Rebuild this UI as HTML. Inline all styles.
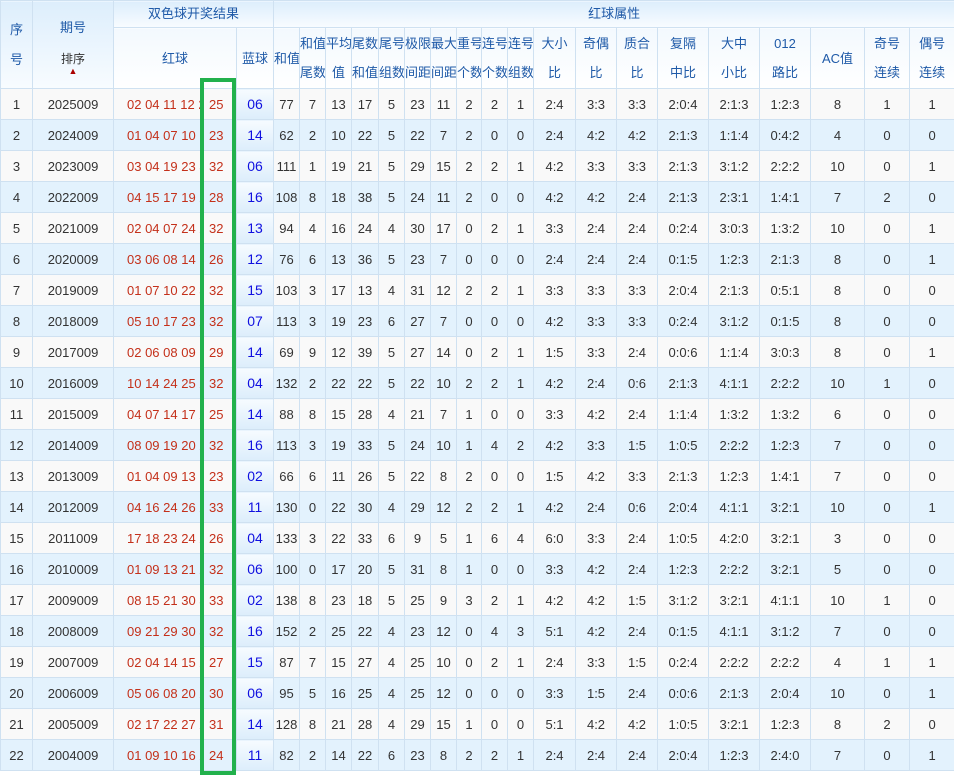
<!DOCTYPE html>
<html><head><meta charset="utf-8">
<style>
body{margin:0;width:954px;height:771px;overflow:hidden;background:#fff;font-family:"Liberation Sans","Noto Sans CJK SC",sans-serif;}
table{border-collapse:collapse;table-layout:fixed;width:954px;font-size:13px;color:#333;}
td,th{border:1px solid #cfe1f1;text-align:center;padding:0;white-space:nowrap;overflow:hidden;}
th{font-weight:normal;color:#1f5aa8;background:linear-gradient(#f3f9fe,#fff);line-height:29px;}
thead tr.r1 th{height:26px;line-height:24px;background:linear-gradient(#ddeefc,#f8fcff);}
thead tr.r2 th{height:60px;}
tbody tr{height:31px;}
tbody td{height:30px;}
tbody tr:nth-child(odd) td{background:#f9f9f9;}
tbody tr:nth-child(even) td{background:#e3f2fd;}
tbody td.b{color:#1010e0;background:linear-gradient(#f6fbff,#dcedfb)!important;font-size:14px;}
td.r{position:relative;text-align:left;color:#c4301a;font-size:13px;}
td.r span.a{position:absolute;left:13px;top:8px;width:74px;overflow:hidden;}
td.r span.c{position:absolute;left:95px;top:8px;}
#g{position:absolute;left:200px;top:78px;width:28px;height:689px;border:4px solid #22b14c;}
th.qh{position:relative;}
th.qh div{position:absolute;left:0;right:0;line-height:16px;}
.sm{font-size:12px;color:#333}
</style></head><body>
<table>
<colgroup><col style="width:32px"><col style="width:81px"><col style="width:123px"><col style="width:37px"><col style="width:26px"><col style="width:26px"><col style="width:26px"><col style="width:27px"><col style="width:26px"><col style="width:26px"><col style="width:26px"><col style="width:25px"><col style="width:26px"><col style="width:26px"><col style="width:42px"><col style="width:41px"><col style="width:41px"><col style="width:51px"><col style="width:51px"><col style="width:51px"><col style="width:54px"><col style="width:45px"><col style="width:45px"></colgroup>
<thead>
<tr class="r1"><th rowspan="2" style="line-height:30px">序<br>号</th><th rowspan="2" class="qh"><div style="top:19px">期号</div><div class="sm" style="top:50px">排序</div><div style="top:62px;color:#a00;font-size:9px">▲</div></th><th colspan="2">双色球开奖结果</th><th colspan="19">红球属性</th></tr>
<tr class="r2"><th>红球</th><th>蓝球</th><th>和值</th><th>和值<br>尾数</th><th>平均<br>值</th><th>尾数<br>和值</th><th>尾号<br>组数</th><th>极限<br>间距</th><th>最大<br>间距</th><th>重号<br>个数</th><th>连号<br>个数</th><th>连号<br>组数</th><th>大小<br>比</th><th>奇偶<br>比</th><th>质合<br>比</th><th>复隔<br>中比</th><th>大中<br>小比</th><th>012<br>路比</th><th>AC值</th><th>奇号<br>连续</th><th>偶号<br>连续</th></tr>
</thead>
<tbody>
<tr><td>1</td><td>2025009</td><td class="r"><span class="a">02 04 11 12 21</span><span class="c">25</span></td><td class="b">06</td><td>77</td><td>7</td><td>13</td><td>17</td><td>5</td><td>23</td><td>11</td><td>2</td><td>2</td><td>1</td><td>2:4</td><td>3:3</td><td>3:3</td><td>2:0:4</td><td>2:1:3</td><td>1:2:3</td><td>8</td><td>1</td><td>1</td></tr>
<tr><td>2</td><td>2024009</td><td class="r"><span class="a">01 04 07 10 17</span><span class="c">23</span></td><td class="b">14</td><td>62</td><td>2</td><td>10</td><td>22</td><td>5</td><td>22</td><td>7</td><td>2</td><td>0</td><td>0</td><td>2:4</td><td>4:2</td><td>4:2</td><td>2:1:3</td><td>1:1:4</td><td>0:4:2</td><td>4</td><td>0</td><td>0</td></tr>
<tr><td>3</td><td>2023009</td><td class="r"><span class="a">03 04 19 23 30</span><span class="c">32</span></td><td class="b">06</td><td>111</td><td>1</td><td>19</td><td>21</td><td>5</td><td>29</td><td>15</td><td>2</td><td>2</td><td>1</td><td>4:2</td><td>3:3</td><td>3:3</td><td>2:1:3</td><td>3:1:2</td><td>2:2:2</td><td>10</td><td>0</td><td>1</td></tr>
<tr><td>4</td><td>2022009</td><td class="r"><span class="a">04 15 17 19 25</span><span class="c">28</span></td><td class="b">16</td><td>108</td><td>8</td><td>18</td><td>38</td><td>5</td><td>24</td><td>11</td><td>2</td><td>0</td><td>0</td><td>4:2</td><td>4:2</td><td>2:4</td><td>2:1:3</td><td>2:3:1</td><td>1:4:1</td><td>7</td><td>2</td><td>0</td></tr>
<tr><td>5</td><td>2021009</td><td class="r"><span class="a">02 04 07 24 25</span><span class="c">32</span></td><td class="b">13</td><td>94</td><td>4</td><td>16</td><td>24</td><td>4</td><td>30</td><td>17</td><td>0</td><td>2</td><td>1</td><td>3:3</td><td>2:4</td><td>2:4</td><td>0:2:4</td><td>3:0:3</td><td>1:3:2</td><td>10</td><td>0</td><td>1</td></tr>
<tr><td>6</td><td>2020009</td><td class="r"><span class="a">03 06 08 14 15</span><span class="c">26</span></td><td class="b">12</td><td>76</td><td>6</td><td>13</td><td>36</td><td>5</td><td>23</td><td>7</td><td>0</td><td>0</td><td>0</td><td>2:4</td><td>2:4</td><td>2:4</td><td>0:1:5</td><td>1:2:3</td><td>2:1:3</td><td>8</td><td>0</td><td>1</td></tr>
<tr><td>7</td><td>2019009</td><td class="r"><span class="a">01 07 10 22 31</span><span class="c">32</span></td><td class="b">15</td><td>103</td><td>3</td><td>17</td><td>13</td><td>4</td><td>31</td><td>12</td><td>2</td><td>2</td><td>1</td><td>3:3</td><td>3:3</td><td>3:3</td><td>2:0:4</td><td>2:1:3</td><td>0:5:1</td><td>8</td><td>0</td><td>0</td></tr>
<tr><td>8</td><td>2018009</td><td class="r"><span class="a">05 10 17 23 26</span><span class="c">32</span></td><td class="b">07</td><td>113</td><td>3</td><td>19</td><td>23</td><td>6</td><td>27</td><td>7</td><td>0</td><td>0</td><td>0</td><td>4:2</td><td>3:3</td><td>3:3</td><td>0:2:4</td><td>3:1:2</td><td>0:1:5</td><td>8</td><td>0</td><td>0</td></tr>
<tr><td>9</td><td>2017009</td><td class="r"><span class="a">02 06 08 09 15</span><span class="c">29</span></td><td class="b">14</td><td>69</td><td>9</td><td>12</td><td>39</td><td>5</td><td>27</td><td>14</td><td>0</td><td>2</td><td>1</td><td>1:5</td><td>3:3</td><td>2:4</td><td>0:0:6</td><td>1:1:4</td><td>3:0:3</td><td>8</td><td>0</td><td>1</td></tr>
<tr><td>10</td><td>2016009</td><td class="r"><span class="a">10 14 24 25 27</span><span class="c">32</span></td><td class="b">04</td><td>132</td><td>2</td><td>22</td><td>22</td><td>5</td><td>22</td><td>10</td><td>2</td><td>2</td><td>1</td><td>4:2</td><td>2:4</td><td>0:6</td><td>2:1:3</td><td>4:1:1</td><td>2:2:2</td><td>10</td><td>1</td><td>0</td></tr>
<tr><td>11</td><td>2015009</td><td class="r"><span class="a">04 07 14 17 21</span><span class="c">25</span></td><td class="b">14</td><td>88</td><td>8</td><td>15</td><td>28</td><td>4</td><td>21</td><td>7</td><td>1</td><td>0</td><td>0</td><td>3:3</td><td>4:2</td><td>2:4</td><td>1:1:4</td><td>1:3:2</td><td>1:3:2</td><td>6</td><td>0</td><td>0</td></tr>
<tr><td>12</td><td>2014009</td><td class="r"><span class="a">08 09 19 20 25</span><span class="c">32</span></td><td class="b">16</td><td>113</td><td>3</td><td>19</td><td>33</td><td>5</td><td>24</td><td>10</td><td>1</td><td>4</td><td>2</td><td>4:2</td><td>3:3</td><td>1:5</td><td>1:0:5</td><td>2:2:2</td><td>1:2:3</td><td>7</td><td>0</td><td>0</td></tr>
<tr><td>13</td><td>2013009</td><td class="r"><span class="a">01 04 09 13 16</span><span class="c">23</span></td><td class="b">02</td><td>66</td><td>6</td><td>11</td><td>26</td><td>5</td><td>22</td><td>8</td><td>2</td><td>0</td><td>0</td><td>1:5</td><td>4:2</td><td>3:3</td><td>2:1:3</td><td>1:2:3</td><td>1:4:1</td><td>7</td><td>0</td><td>0</td></tr>
<tr><td>14</td><td>2012009</td><td class="r"><span class="a">04 16 24 26 27</span><span class="c">33</span></td><td class="b">11</td><td>130</td><td>0</td><td>22</td><td>30</td><td>4</td><td>29</td><td>12</td><td>2</td><td>2</td><td>1</td><td>4:2</td><td>2:4</td><td>0:6</td><td>2:0:4</td><td>4:1:1</td><td>3:2:1</td><td>10</td><td>0</td><td>1</td></tr>
<tr><td>15</td><td>2011009</td><td class="r"><span class="a">17 18 23 24 25</span><span class="c">26</span></td><td class="b">04</td><td>133</td><td>3</td><td>22</td><td>33</td><td>6</td><td>9</td><td>5</td><td>1</td><td>6</td><td>4</td><td>6:0</td><td>3:3</td><td>2:4</td><td>1:0:5</td><td>4:2:0</td><td>3:2:1</td><td>3</td><td>0</td><td>0</td></tr>
<tr><td>16</td><td>2010009</td><td class="r"><span class="a">01 09 13 21 24</span><span class="c">32</span></td><td class="b">06</td><td>100</td><td>0</td><td>17</td><td>20</td><td>5</td><td>31</td><td>8</td><td>1</td><td>0</td><td>0</td><td>3:3</td><td>4:2</td><td>2:4</td><td>1:2:3</td><td>2:2:2</td><td>3:2:1</td><td>5</td><td>0</td><td>0</td></tr>
<tr><td>17</td><td>2009009</td><td class="r"><span class="a">08 15 21 30 31</span><span class="c">33</span></td><td class="b">02</td><td>138</td><td>8</td><td>23</td><td>18</td><td>5</td><td>25</td><td>9</td><td>3</td><td>2</td><td>1</td><td>4:2</td><td>4:2</td><td>1:5</td><td>3:1:2</td><td>3:2:1</td><td>4:1:1</td><td>10</td><td>1</td><td>0</td></tr>
<tr><td>18</td><td>2008009</td><td class="r"><span class="a">09 21 29 30 31</span><span class="c">32</span></td><td class="b">16</td><td>152</td><td>2</td><td>25</td><td>22</td><td>4</td><td>23</td><td>12</td><td>0</td><td>4</td><td>3</td><td>5:1</td><td>4:2</td><td>2:4</td><td>0:1:5</td><td>4:1:1</td><td>3:1:2</td><td>7</td><td>0</td><td>0</td></tr>
<tr><td>19</td><td>2007009</td><td class="r"><span class="a">02 04 14 15 25</span><span class="c">27</span></td><td class="b">15</td><td>87</td><td>7</td><td>15</td><td>27</td><td>4</td><td>25</td><td>10</td><td>0</td><td>2</td><td>1</td><td>2:4</td><td>3:3</td><td>1:5</td><td>0:2:4</td><td>2:2:2</td><td>2:2:2</td><td>4</td><td>1</td><td>1</td></tr>
<tr><td>20</td><td>2006009</td><td class="r"><span class="a">05 06 08 20 26</span><span class="c">30</span></td><td class="b">06</td><td>95</td><td>5</td><td>16</td><td>25</td><td>4</td><td>25</td><td>12</td><td>0</td><td>0</td><td>0</td><td>3:3</td><td>1:5</td><td>2:4</td><td>0:0:6</td><td>2:1:3</td><td>2:0:4</td><td>10</td><td>0</td><td>1</td></tr>
<tr><td>21</td><td>2005009</td><td class="r"><span class="a">02 17 22 27 29</span><span class="c">31</span></td><td class="b">14</td><td>128</td><td>8</td><td>21</td><td>28</td><td>4</td><td>29</td><td>15</td><td>1</td><td>0</td><td>0</td><td>5:1</td><td>4:2</td><td>4:2</td><td>1:0:5</td><td>3:2:1</td><td>1:2:3</td><td>8</td><td>2</td><td>0</td></tr>
<tr><td>22</td><td>2004009</td><td class="r"><span class="a">01 09 10 16 22</span><span class="c">24</span></td><td class="b">11</td><td>82</td><td>2</td><td>14</td><td>22</td><td>6</td><td>23</td><td>8</td><td>2</td><td>2</td><td>1</td><td>2:4</td><td>2:4</td><td>2:4</td><td>2:0:4</td><td>1:2:3</td><td>2:4:0</td><td>7</td><td>0</td><td>1</td></tr>
</tbody>
</table>
<div id="g"></div>
</body></html>
